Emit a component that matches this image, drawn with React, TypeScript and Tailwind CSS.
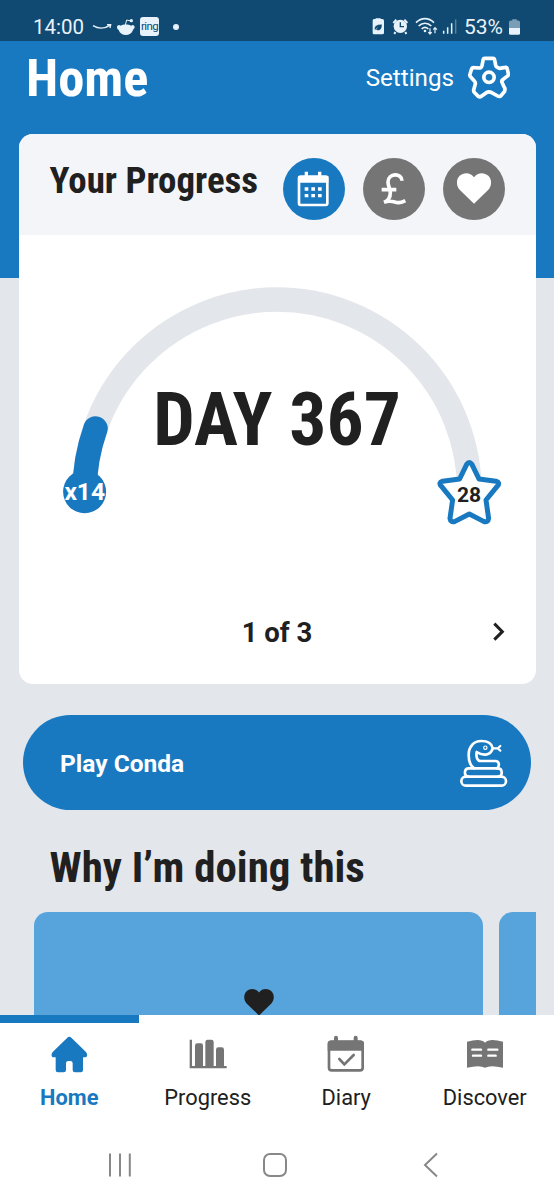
import type { ReactNode } from "react";

type IconProps = { className?: string };

function HeartIcon({ className }: IconProps) {
  return (
    <svg viewBox="0 0 102 92" className={className} fill="currentColor">
      <path d="M51 92 8 50C-3 38-3 19 8 8c12-11 32-11 43 4C62-3 82-3 94 8c11 11 11 30 0 42Z" />
    </svg>
  );
}

function StatusBar() {
  return (
    <div className="flex h-[41px] shrink-0 items-center bg-[#104a72] pt-3 pl-[33px] text-[#e8f2fa]">
      <span className="w-[52px] text-[20.5px] leading-7 whitespace-nowrap">14:00</span>
      <svg viewBox="276 52 132 54" className="ml-[7px] h-[18px] w-11" fill="none">
        <path d="M279 75c15 9 34 10 50-1M321 72h11l-2 10" stroke="currentColor" strokeWidth="4" />
        <path d="M351 80c0-6 7-9 10-5 9-5 24-5 33 0 5-4 10 0 10 5-1 4-4 6-5 8-6 20-37 20-43 0-3-2-5-4-5-8Z" fill="currentColor" />
        <path d="m376 73 4-15 13 3" stroke="currentColor" strokeWidth="3" />
        <circle cx="394" cy="60" r="5" fill="currentColor" />
      </svg>
      <span className="ml-[4px] flex h-[19px] w-[19px] items-center justify-center rounded-[3px] bg-[#e8f2fa] text-[11.5px] leading-none tracking-[-0.6px] text-[#104a72]">
        ring
      </span>
      <span className="ml-[14px] size-1.5 rounded-full bg-[#e8f2fa]" />
      <svg viewBox="285 50 255 56" className="ml-[193px] h-[18.7px] w-[85px]" fill="none">
        <path d="M296 56v-2h15v2h5q5 0 5 5v36q0 5-5 5h-25q-4 0-4-5V61q0-5 4-5Z" fill="currentColor" />
        <path d="M293 90c-3-14 7-18 22-18 1 17-9 22-18 16M290 92l12-10" fill="#104a72" stroke="#e8f2fa" strokeWidth="1.5" />
        <circle cx="370" cy="78" r="20" fill="currentColor" />
        <path d="m349 68 9-10M382 58l9 10M355 95l-3 6M385 95l3 6" stroke="currentColor" strokeWidth="6" />
        <path d="M370 66v13h11" stroke="#104a72" strokeWidth="4" />
        <path d="M417 67c16-16 38-16 54 0M425 77c11-11 27-11 38 0M434 86c6-6 14-6 20 0" stroke="currentColor" strokeWidth="5" />
        <circle cx="444" cy="92" r="4" fill="currentColor" />
        <path d="M459 84v16M454 95l5 6 5-6M474 99V83M469 88l5-6 6 6" stroke="currentColor" strokeWidth="3.5" />
        <path d="M500 91v9M512 81v19M524 69v31" stroke="currentColor" strokeWidth="4.500" />
        <path d="M536 57v43" stroke="#5583a0" strokeWidth="4.500" />
      </svg>
      <span className="ml-[7px] w-[42px] text-[21px] leading-7 tracking-[-0.1px] whitespace-nowrap">53%</span>
      <svg viewBox="0 0 34 48" className="ml-[3px] h-4 w-[11px]">
        <path d="M10 4V0h14v4h5q5 0 5 5v18H0V9q0-5 5-5Z" fill="#7b9eb6" />
        <path d="M0 27h34v16q0 5-5 5H5q-5 0-5-5Z" fill="currentColor" />
      </svg>
    </div>
  );
}

function RoundButton({ active, children }: { active?: boolean; children: ReactNode }) {
  return (
    <button
      className={`flex size-[62px] items-center justify-center rounded-full text-white ${
        active ? "bg-[#1879c1]" : "bg-[#757575]"
      }`}
    >
      {children}
    </button>
  );
}

function Gauge() {
  return (
    <svg viewBox="19 275 517 265" className="h-[265px] w-[517px]">
      <path d="M84.5 492a192.5 192.5 0 0 1 385 0" fill="none" stroke="#e3e6eb" strokeWidth="24.5" />
      <path
        d="M84.5 492a192.5 192.5 0 0 1 11-63.5"
        fill="none"
        stroke="#1879c1"
        strokeWidth="24.5"
        strokeLinecap="round"
      />
      <circle cx="84.6" cy="491.7" r="21.5" fill="#1879c1" />
      <text x="84.7" y="500.3" textAnchor="middle" fill="#fff" className="text-[24.5px] font-bold">
        x14
      </text>
      <path
        d="M466.8 464.2q2.5-3.6 5 0l7.2 14.8 17 2.2q4.6 1.5 1.3 5L486 500l2.6 18.4q-.6 4.6-5 3L469.3 514l-14.3 7.4q-4.4 1.6-5-3L452.6 500 441.3 486.2q-3.3-3.5 1.3-5L459.6 479Z"
        fill="#fff"
        stroke="#1879c1"
        strokeWidth="5"
        strokeLinejoin="round"
      />
      <text x="469" y="502" textAnchor="middle" fill="#202020" className="text-[21px] font-bold">
        28
      </text>
      <text
        x="277"
        y="445"
        textAnchor="middle"
        fill="#202020"
        className="font-['Roboto_Condensed','Roboto',sans-serif] text-[73.5px] font-bold font-stretch-condensed"
      >
        DAY 367
      </text>
    </svg>
  );
}

function ProgressCard() {
  return (
    <section className="mx-auto mt-[17.5px] h-[550.5px] w-[517px] overflow-hidden rounded-[14px] bg-white">
      <div className="flex h-[101.5px] justify-between bg-[#f3f5f9] pt-6 pr-[31px] pl-[31px]">
        <h2 className="pt-[1px] font-['Roboto_Condensed','Roboto',sans-serif] text-[36.9px] leading-[44px] font-bold whitespace-nowrap font-stretch-condensed">
          Your Progress
        </h2>
        <div className="flex gap-[18px]">
          <RoundButton active>
            <svg viewBox="62 152 98 108" className="h-9 w-[32.7px]" fill="none">
              <rect x="68" y="169" width="85" height="85" rx="5" stroke="currentColor" strokeWidth="8" />
              <path d="M65 167h91v20H65ZM85 154h10v18H85ZM125 154h10v18h-10Z" fill="currentColor" />
              <path
                d="M85 201h11v10H85ZM105 201h11v10h-11ZM125 201h11v10h-11ZM85 221h11v10H85ZM105 221h11v10h-11ZM125 221h11v10h-11Z"
                fill="currentColor"
              />
            </svg>
          </RoundButton>
          <RoundButton>
            <svg viewBox="312 156 76 98" className="h-[32.7px] w-[25.3px]" fill="none" stroke="currentColor">
              <path
                d="M375 182c0-24-42-24-42 4 0 12 7 20 7 32 0 14-7 24-19 29 22-8 30 0 42 1 10 1 14-2 22-6M314 209h44"
                strokeWidth="11"
              />
            </svg>
          </RoundButton>
          <RoundButton>
            <HeartIcon className="h-[31px] w-[34px]" />
          </RoundButton>
        </div>
      </div>
      <div className="pt-[40px]">
        <Gauge />
      </div>
      <div className="grid h-[184px] grid-cols-3 items-center pr-[31px] pl-[31px]">
        <span />
        <span className="pt-[2px] text-center text-[27.5px] leading-8 font-bold">1 of 3</span>
        <svg viewBox="0 0 36 58" className="h-[19.3px] w-3 justify-self-end" fill="none">
          <path d="m4 5 24 24L4 53" stroke="#202020" strokeWidth="9" />
        </svg>
      </div>
    </section>
  );
}

function SnakeIcon() {
  return (
    <svg
      viewBox="176 112 150 150"
      className="size-[50px]"
      fill="none"
      stroke="currentColor"
      strokeWidth="8"
      strokeLinejoin="round"
      strokeLinecap="round"
    >
      <rect x="183" y="228" width="134" height="27" rx="13.5" />
      <path d="M204 228c-14 0-14-25 2-25h86c16 0 16 25 2 25" />
      <path d="M222 203c-14-8-17-21-17-40 0-26 16-42 38-42 19 0 31 7 34 21-3 18-24 28-48 12-2 14 1 27 12 27h44c13 0 13 16 5 22" />
      <path d="M278 143h14m0 0 8-7m-8 7 8 7" strokeWidth="6.5" />
      <circle cx="255" cy="141" r="5" strokeWidth="3.5" />
    </svg>
  );
}

function Tab({ label, active, children }: { label: string; active?: boolean; children: ReactNode }) {
  return (
    <div
      className={`flex flex-1 flex-col items-center border-t-8 ${
        active
          ? "border-[#1879c1] text-[21.8px] font-bold text-[#1879c1]"
          : "border-white text-[21.8px] text-[#202020]"
      }`}
    >
      <div className={`flex h-[61px] items-center ${active ? "text-[#1879c1]" : "text-[#757575]"}`}>
        {children}
      </div>
      <span className="leading-7">{label}</span>
    </div>
  );
}

function TabBar() {
  return (
    <nav className="flex h-[107px]">
      <Tab label="Home" active>
        <svg viewBox="150 164 114 114" className="size-[38px]" fill="currentColor">
          <path d="M202 172q6-6 12 0l44 43q7 10 0 16h-9v38q0 7-7 7h-17q-7 0-7-7v-20q0-7-7-7h-6q-7 0-7 7v20q0 7-7 7h-17q-7 0-7-7v-38h-9q-7-6 0-16Z" />
        </svg>
      </Tab>
      <Tab label="Progress">
        <svg viewBox="566 164 114 114" className="size-[38px]" fill="currentColor">
          <path d="M568 178h7v79h104v7H568Z" />
          <path d="M584 258v-62q0-7 7-7h11q6 0 6 7v62ZM615 258v-73q0-7 7-7h11q7 0 7 7v73ZM647 258v-50q0-7 7-7h10q7 0 7 7v50Z" />
        </svg>
      </Tab>
      <Tab label="Diary">
        <svg viewBox="150 163 114 114" className="size-[38px]" fill="none">
          <rect x="156" y="183" width="101" height="86" rx="8" stroke="currentColor" strokeWidth="8" />
          <path d="M152 210v-22q0-8 8-8h11v-9q0-6 6-6t6 6v9h47v-9q0-6 6-6t6 6v9h11q8 0 8 8v22Z" fill="currentColor" />
          <path d="m187 235 15 16 28-28" stroke="currentColor" strokeWidth="8" strokeLinecap="round" />
        </svg>
      </Tab>
      <Tab label="Discover">
        <svg viewBox="567 164 114 114" className="size-[38px]" fill="none">
          <path d="M570 184q42-11 54 3 12-14 54-3v78q-38-9-54 0-16-9-54 0Z" fill="currentColor" />
          <path d="M586 208h26M588 226h24M634 208h27M634 226h22" stroke="#fff" strokeWidth="7" strokeLinecap="round" />
        </svg>
      </Tab>
    </nav>
  );
}

export default function App() {
  return (
    <div className="flex h-[1200px] w-[554px] flex-col overflow-hidden bg-white font-['Roboto',sans-serif] text-[#202020]">
      <StatusBar />
      <main className="h-[974px] shrink-0 overflow-hidden bg-[linear-gradient(to_bottom,#1879c1_237px,#e3e6eb_237px)]">
        <header className="flex h-[75px] items-center justify-between pr-11 pb-[2px] pl-[26px] text-white">
          <h1 className="font-['Roboto_Condensed','Roboto',sans-serif] text-[52.5px] leading-[60px] font-bold font-stretch-condensed">
            Home
          </h1>
          <div className="flex items-center gap-3.5">
            <span className="text-[24.2px] leading-8">Settings</span>
            <svg
              viewBox="574 167 126 128"
              className="h-[42.7px] w-[42px]"
              fill="none"
              stroke="currentColor"
              strokeLinejoin="round"
            >
              <path
                d="M624 174h25q4 0 5 5l3 16q1 5 7 7l5 2 17-3q5-1 6 5l3 15q1 4-4 7l-13 10q-4 3-2 8l5 11q2 4 4 8l-1 8-12 14q-4 3-9 0l-18-10q-8-5-16 0l-14 10q-5 4-10 1l-11-11q-5-5-2-12l4-14q1-5-3-9l-10-11q-5-4-3-10l4-13q2-7 9-6l14 1q7 0 9-7l3-16q1-6 5-6Z"
                strokeWidth="11"
              />
              <circle cx="637" cy="231" r="15.5" strokeWidth="11" />
            </svg>
          </div>
        </header>

        <ProgressCard />

        <button className="mx-auto mt-[31px] flex h-[95px] w-[508px] items-center justify-between rounded-[48px] bg-[#1879c1] pr-[22px] pl-[37px] text-white">
          <span className="pt-[2px] text-[24.5px] leading-8 font-bold">Play Conda</span>
          <SnakeIcon />
        </button>

        <h2 className="mt-8 ml-[49.5px] font-['Roboto_Condensed','Roboto',sans-serif] text-[42.9px] leading-[50px] font-bold whitespace-nowrap font-stretch-condensed">
          Why I’m doing this
        </h2>
        <div className="mt-5 mr-[18px] flex gap-4 overflow-hidden pl-[34px]">
          <div className="flex h-[180px] w-[449px] shrink-0 justify-center rounded-[14px] bg-[#57a3db] pt-[77px]">
            <HeartIcon className="h-[26.5px] w-[30px]" />
          </div>
          <div className="h-[180px] w-[449px] shrink-0 rounded-[14px] bg-[#57a3db]" />
        </div>
      </main>

      <TabBar />

      <div className="flex h-[78px] items-center pt-[8px] pl-[108px] text-[#888]">
        <svg viewBox="0 0 24 26" className="h-[26px] w-6" stroke="currentColor" strokeWidth="2">
          <path d="M2 1.5v23M12 1.5v23M21.8 1.5v23" />
        </svg>
        <span className="ml-[131px] size-6 rounded-[7px] border-2 border-[#888]" />
        <svg viewBox="0 0 16 26" className="ml-[136px] h-[26px] w-4" fill="none" stroke="currentColor" strokeWidth="2">
          <path d="M14 1.5 2 13l12 11.5" />
        </svg>
      </div>
    </div>
  );
}
